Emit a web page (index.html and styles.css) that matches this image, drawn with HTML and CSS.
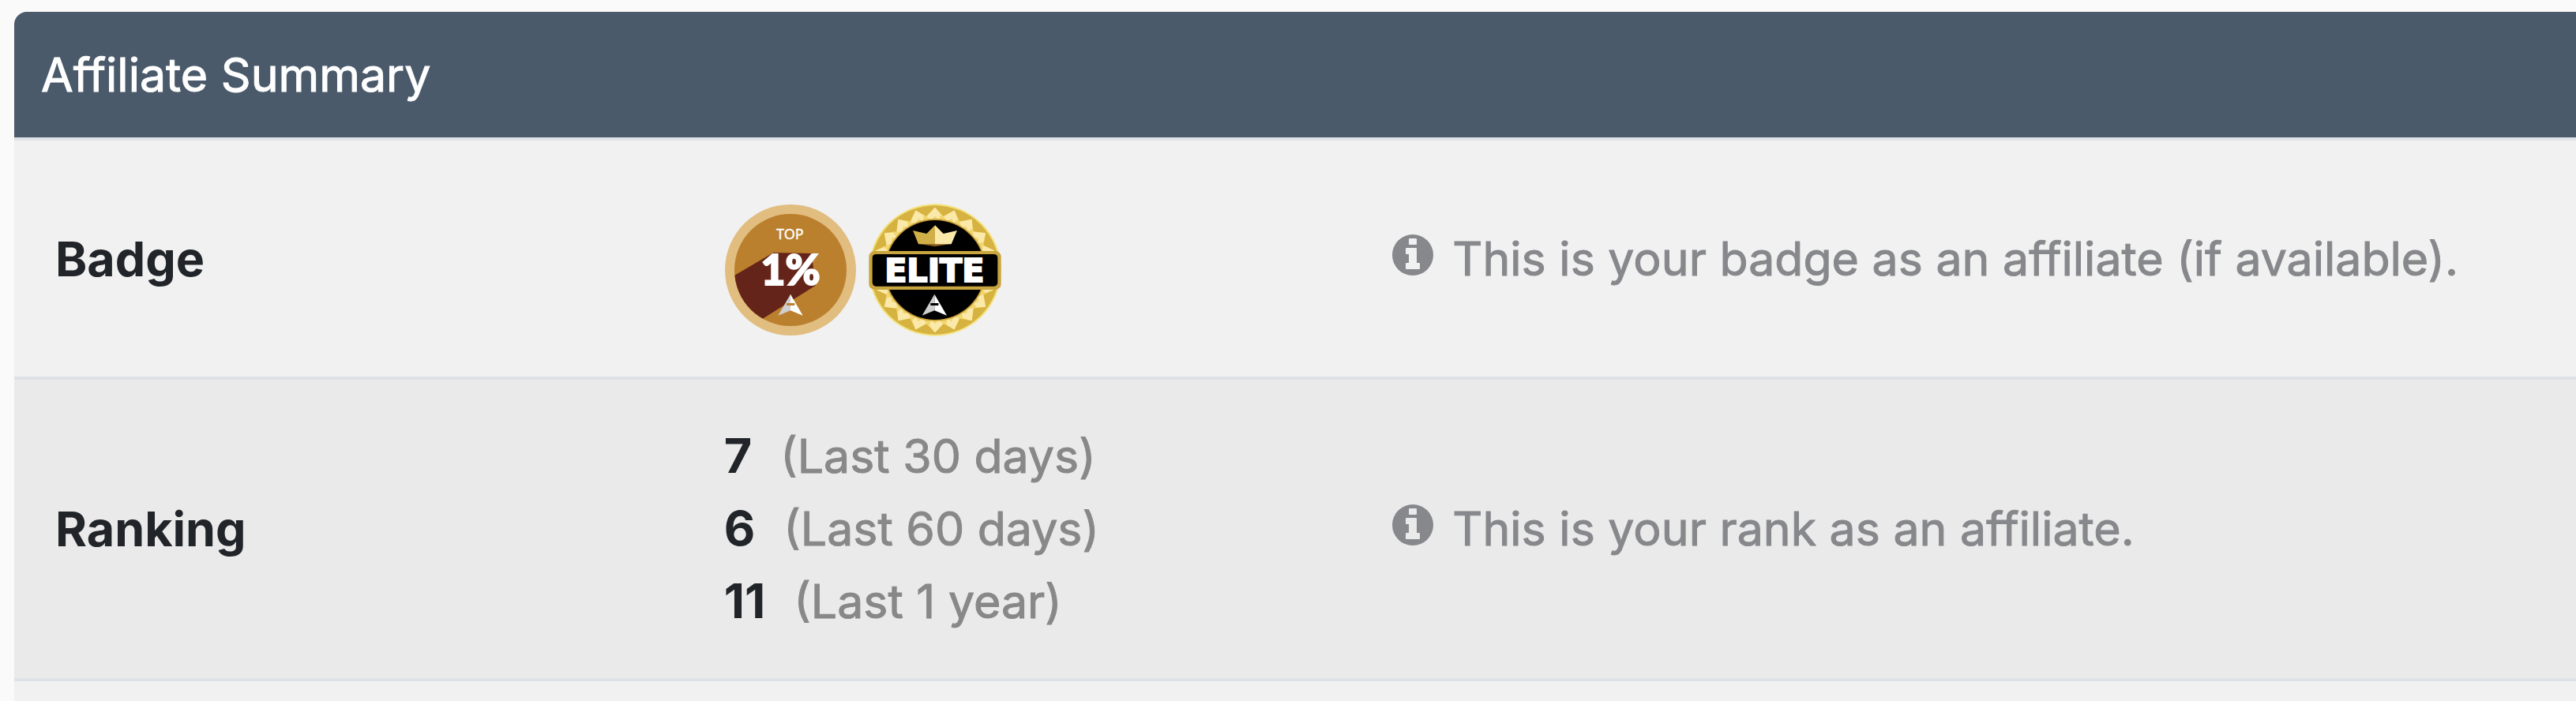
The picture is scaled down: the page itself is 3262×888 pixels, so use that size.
FILE: index.html
```html
<!DOCTYPE html>
<html lang="en">
<head>
  <meta charset="UTF-8" />
  <meta name="viewport" content="width=device-width, initial-scale=1.0"/>
  <title>Affiliate Summary</title>
  <link rel="stylesheet" href="styles.css">
</head>
<body>
  <svg class="defs" width="0" height="0" aria-hidden="true">
    <defs>
      <symbol id="info" viewBox="0 0 52 52">
        <path fill-rule="evenodd" d="M26 0a26 26 0 1 0 0 52a26 26 0 0 0 0-52zM22 5h8a1 1 0 0 1 1 1v6a1 1 0 0 1-1 1h-8a1 1 0 0 1-1-1v-6a1 1 0 0 1 1-1zM18 17h12a1 1 0 0 1 1 1v18h3a1 1 0 0 1 1 1v6a1 1 0 0 1-1 1h-16a1 1 0 0 1-1-1v-6a1 1 0 0 1 1-1h3v-11h-3a1 1 0 0 1-1-1v-6a1 1 0 0 1 1-1z"/>
      </symbol>
      <g id="spike">
        <path fill="#f2d66e" d="M852 65L820 98L812 128H892L884 98z"/>
        <path fill="#fae9a9" d="M852 65L820 100L838 112L852 98L866 112L874 92z"/>
      </g>
      <g id="arrow">
        <path fill="#fff" d="M305 395L352 476L305 457z"/>
        <path fill="#cfcfcf" d="M305 395L258 476L305 457z"/>
      </g>
    </defs>
  </svg>

  <div class="card">
    <div class="card-header">Affiliate Summary</div>
    <table class="summary">
      <tr>
        <th scope="row">Badge</th>
        <td class="badges">
          <div class="badge-list">
            <svg class="badge" viewBox="53 51 504 504" role="img" aria-label="Top 1%">
              <clipPath id="disc"><circle cx="305" cy="303" r="213"/></clipPath>
              <circle cx="305" cy="303" r="249" fill="#e1bd80"/>
              <circle cx="305" cy="303" r="213" fill="#bb802e"/>
              <path clip-path="url(#disc)" fill="#652419" d="M93 323L240 237L385 240L400 362L197 490L90 520z"/>
              <text class="top" x="303" y="186">TOP</text>
              <text class="percent" x="305" y="361">1%</text>
              <use href="#arrow"/>
              <path fill="#bb802e" d="M290 429h31v9h-31z"/>
            </svg>
            <svg class="badge" viewBox="600 51 504 504" role="img" aria-label="Elite">
              <circle cx="852" cy="303" r="251" fill="#f2e27c"/>
              <circle cx="852" cy="303" r="245" fill="#d6b241"/>
              <g id="spikes"></g>
              <circle cx="852" cy="303" r="194" fill="#c99f39"/>
              <circle cx="852" cy="303" r="189"/>
              <rect x="601" y="231" width="502" height="147" rx="22" fill="#c9a53f"/>
              <rect x="614" y="243" width="476" height="122" rx="14"/>
              <text class="elite" x="850" y="347">ELITE</text>
              <path fill="#8a5a20" d="M790 203L852 214L914 203z"/>
              <path fill="#d0af48" d="M768 153L820 165L852 133V205H789z"/>
              <path fill="#fae9a9" d="M936 153L884 165L852 133V205H914z"/>
              <use href="#arrow" x="545"/>
              <path d="M835 429h30v9h-30z"/>
            </svg>
          </div>
        </td>
        <td class="note"><svg class="icon"><use href="#info"/></svg>This is your badge as an affiliate (if available).</td>
      </tr>
      <tr>
        <th scope="row">Ranking</th>
        <td>
          <div><strong>7</strong><span class="period">(Last 30 days)</span></div>
          <div><strong>6</strong><span class="period">(Last 60 days)</span></div>
          <div><strong>11</strong><span class="period">(Last 1 year)</span></div>
        </td>
        <td class="note"><svg class="icon"><use href="#info"/></svg>This is your rank as an affiliate.</td>
      </tr>
      <tr class="next">
        <td colspan="3"></td>
      </tr>
    </table>
  </div>

  <script>
    // gold spikes around the elite badge
    let spikes = "";
    for (let i = 0; i < 20; i++) {
      spikes += `<use href="#spike" transform="rotate(${i * 18} 852 303)"/>`;
    }
    document.getElementById("spikes").innerHTML = spikes;
  </script>
</body>
</html>
```
FILE: styles.css
```css
body {
  margin: 0;
  background: #fafafa;
  color: #212529;
  font-family: Inter, "Liberation Sans", sans-serif;
  font-size: 59px;
  line-height: 92px;
}
.defs {
  display: block;
}
.card {
  margin: 15px 0 0 18px;
}
.card-header {
  padding: 34px 34px 33px;
  background: #4a5a6a;
  color: #fff;
  border-top-left-radius: 16px;
}
.card-header,
.period,
.note {
  -webkit-text-stroke: 1px currentColor;
}
.summary {
  width: 100%;
  table-layout: fixed;
  border-collapse: separate;
  border-spacing: 0;
}
.summary th,
.summary td {
  padding: 51px 52px;
  border-top: 4px solid #dee2e6;
  text-align: left;
  vertical-align: middle;
}
.summary th,
.summary strong {
  font-size: 61px;
  font-weight: 700;
}
.summary strong {
  line-height: 1;
}
.summary th,
.summary tr td:nth-child(2) {
  width: 26.1%;
  box-sizing: border-box;
}
.summary tr:nth-child(odd) {
  background: #f1f1f1;
}
.summary tr:nth-child(even) {
  background: #eaeaea;
}
.summary .badges {
  padding-top: 80px;
}
.summary .next td {
  padding: 13px 0 12px;
}
.badge-list {
  display: flex;
  gap: 15px;
}
.badge {
  width: 168px;
  height: 168px;
}
.top, .percent, .elite {
  fill: #fff;
  stroke: #fff;
  text-anchor: middle;
}
.top {
  font: 400 54px "Noto Sans", sans-serif;
}
.percent {
  font: 900 160px Lato, sans-serif;
  stroke-width: 6px;
}
.elite {
  font: 700 124px "DejaVu Sans", sans-serif;
  stroke-width: 6px;
}
.period {
  margin-left: 36px;
  color: #888;
}
.summary .note {
  padding-right: 0;
  color: #87888c;
  white-space: nowrap;
}
.icon {
  width: 52px;
  height: 52px;
  margin-right: 24px;
  fill: currentColor;
}
```
